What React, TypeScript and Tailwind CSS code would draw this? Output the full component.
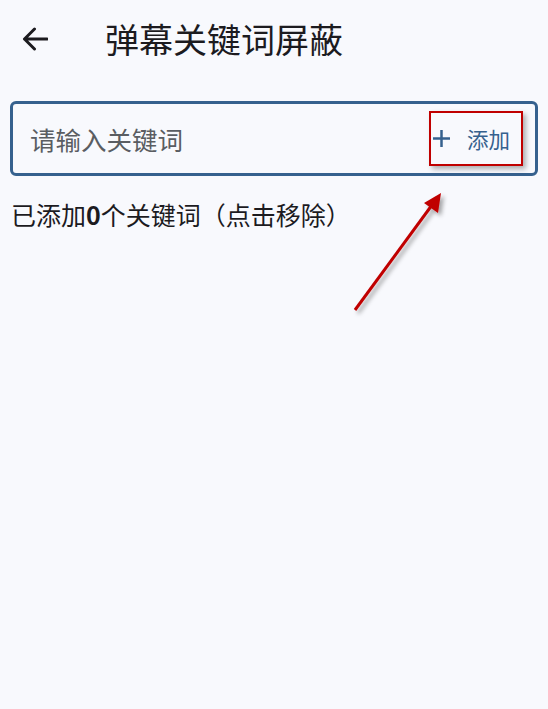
import React from "react";

export default function App() {
  return (
    <div
      className="relative w-[548px] h-[709px] bg-[#f8f9fd] overflow-hidden"
      style={{ fontFamily: '"Noto Sans CJK SC", "Noto Sans", sans-serif' }}
    >
      {/* Header */}
      <div className="flex items-center h-[78px] pl-[22px]">
        <svg width="26" height="24" viewBox="0 0 26 24" className="text-[#1c1b1f]">
          <path
            d="M25 12H2.5M12.5 2L2.5 12l10 10"
            fill="none"
            stroke="currentColor"
            strokeWidth="3"
            strokeLinecap="round"
            strokeLinejoin="round"
          />
        </svg>
        <div className="ml-[57px] text-[34px] leading-none text-[#1c1b1f]">
          弹幕关键词屏蔽
        </div>
      </div>

      {/* Input */}
      <div className="mx-[10px] mt-[23px] h-[75px] border-[3px] border-[#36618e] rounded-[6px] flex items-center pl-[17px] pr-[12px]">
        <div className="flex-1 text-[25.5px] text-[#5a5d62] leading-none">请输入关键词</div>
        <div className="h-[55px] w-[94px] border-2 border-[#c00000] flex items-center pl-[2px] shadow-[3px_3px_5px_rgba(0,0,0,0.3)]">
          <svg width="17" height="17" viewBox="0 0 17 17" className="text-[#36618e]">
            <path d="M8.5 0v17M0 8.5h17" stroke="currentColor" strokeWidth="2.5" />
          </svg>
          <span className="ml-[17px] text-[#36618e] text-[21.5px] leading-none">添加</span>
        </div>
      </div>

      {/* Count text */}
      <div className="mt-[26px] pl-[11px] text-[25px] leading-none text-[#1c1b1f]">
        已添加<span className="font-bold">0</span>个关键词（点击移除）
      </div>

      {/* Annotation arrow */}
      <svg
        className="absolute left-0 top-0 pointer-events-none"
        width="548"
        height="709"
        viewBox="0 0 548 709"
      >
        <defs>
          <filter id="sh" x="-50%" y="-50%" width="200%" height="200%">
            <feDropShadow dx="3" dy="3" stdDeviation="2" floodColor="#000" floodOpacity="0.35" />
          </filter>
        </defs>
        <g filter="url(#sh)">
          <line x1="355" y1="310" x2="432" y2="205" stroke="#c00000" strokeWidth="3" />
          <polygon points="441,193 424,203 438,213" fill="#c00000" />
        </g>
      </svg>
    </div>
  );
}
